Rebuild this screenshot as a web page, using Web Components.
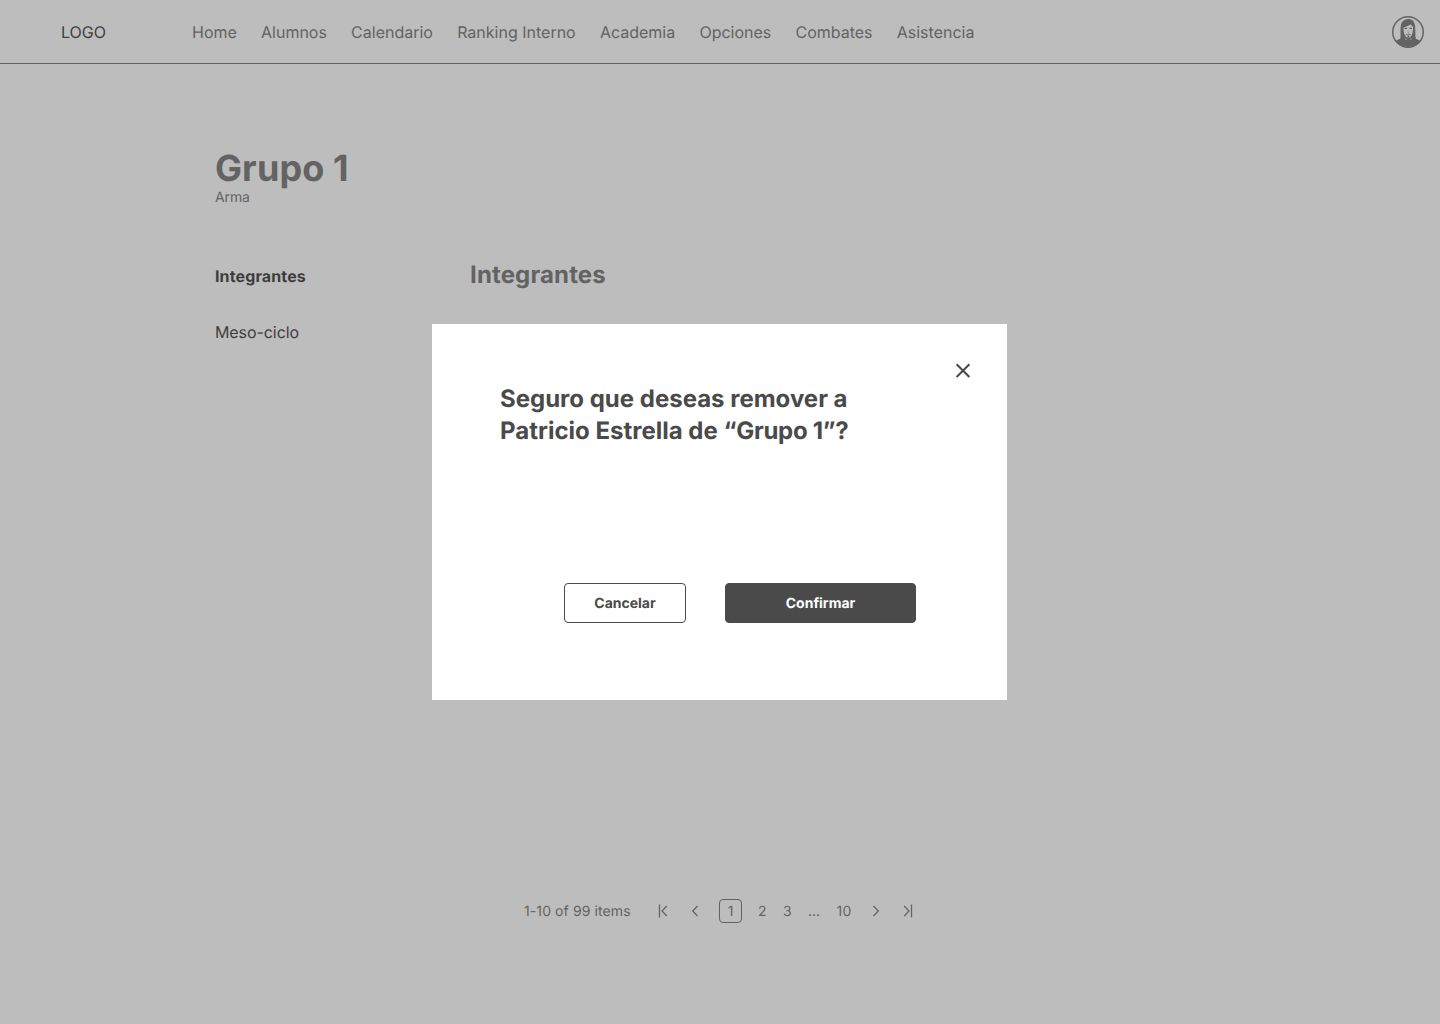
<!DOCTYPE html>
<html lang="es">
<head>
<meta charset="utf-8">
<title>Grupo 1</title>
<style>
html,body{margin:0;height:100%}
body{font-family:Inter,"Liberation Sans",sans-serif;color:#636363;background:#bdbdbd;overflow:hidden;text-rendering:geometricPrecision}
</style>
</head>
<body>
<group-page></group-page>
<script>
const define=(name,html)=>customElements.define(name,class extends HTMLElement{
  constructor(){super();const t=document.createElement('template');t.innerHTML=html;
    this.attachShadow({mode:'open'}).append(t.content.cloneNode(true));}
});

define('user-avatar',`<style>:host{display:block;width:32px;height:32px}svg{display:block}</style>
<svg width="32" height="32" viewBox="0 0 32 32" fill="none">
<defs><clipPath id="c"><circle cx="16" cy="16" r="15"/></clipPath></defs>
<g clip-path="url(#c)" fill="#636363">
<path d="M8.200 22.800C9 19 8.200 15.500 8.700 10.500C9.200 5.500 12 3.300 14.800 3.400C16 2.700 22.300 2.600 23.100 10C23.600 15.500 23 19 23.800 22.800C26 23.600 28 24.500 29 26L26 32H6L3 26C4 24.500 6 23.600 8.200 22.800Z"/>
<path d="M11.600 11.500C13.500 10.500 17.500 9.600 18.300 8.200C19.200 9.400 20.600 10.200 21 11.300C21.200 14 20.800 17.500 19.500 19.700C18.700 21 17.500 21.500 16.300 21.500C15 21.500 13.900 21 13.100 19.700C11.700 17.500 11.400 14 11.600 11.500Z" fill="#bdbdbd"/>
<path d="M12.600 11.900Q13.800 11.200 15 11.900V12.900H12.600ZM17.500 11.900Q18.700 11.200 19.900 11.900V12.900H17.500ZM15.500 15.800H17.100L16.700 16.400H15.900ZM13.200 20.200Q13.500 17.700 16.300 17.500Q19.100 17.700 19.400 20.200L18.700 19.300Q18 18.300 16.300 18.400Q14.600 18.300 13.900 19.300ZM15.200 19.600H17.400L17 21.600H15.600Z"/>
<path d="M13 22L15.800 23.200L13.200 24.200ZM19.600 22L16.800 23.200L19.400 24.200Z" fill="#bdbdbd" opacity=".45"/>
</g>
<circle cx="16" cy="16" r="15.250" stroke="#636363" stroke-width="1.500"/></svg>`);

define('nav-link',`<style>:host{display:block;font-size:16px;line-height:24px;white-space:nowrap}</style><slot></slot>`);

define('top-bar',`<style>
:host{display:flex;box-sizing:border-box;height:64px;border-bottom:1px solid #636363;align-items:center;padding:0 16px 0 61px}
.logo{width:131px;font-size:16px;line-height:24px;color:#3d3d3d}
nav{display:flex;gap:24.200px;flex:1}
</style>
<div class="logo">LOGO</div>
<nav><nav-link>Home</nav-link><nav-link>Alumnos</nav-link><nav-link>Calendario</nav-link><nav-link>Ranking Interno</nav-link><nav-link>Academia</nav-link><nav-link>Opciones</nav-link><nav-link>Combates</nav-link><nav-link>Asistencia</nav-link></nav>
<user-avatar></user-avatar>`);

define('group-heading',`<style>:host{display:block;padding:82px 0 0 215px}
h1{margin:0;font-size:36px;line-height:42px;font-weight:700;padding-top:1px;letter-spacing:.1px}
p{margin:0;font-size:14px;line-height:18px;letter-spacing:-.1px}</style>
<h1><slot></slot></h1><p><slot name="kind"></slot></p>`);

define('group-body',`<style>:host{display:flex;box-sizing:border-box;padding:51px 0 0 215px;height:692px}
aside{width:255px;display:flex;flex-direction:column;gap:32px;font-size:16px;line-height:24px;color:#3d3d3d;padding-top:6px}
b{font-weight:700;letter-spacing:.12px}
span{letter-spacing:-.08px}
h2{margin:0;font-size:24px;line-height:32px;font-weight:700;padding-top:1px;letter-spacing:.14px}</style>
<aside><b>Integrantes</b><span>Meso-ciclo</span></aside><main><h2>Integrantes</h2></main>`);

define('page-arrow',`<style>:host{display:block;width:24px;height:24px}svg{display:block;fill:none;stroke:#636363;stroke-width:1.250}
path{display:none}:host([to=first]) .first,:host([to=prev]) .prev,:host([to=next]) .next,:host([to=last]) .last{display:block}</style>
<svg width="24" height="24" viewBox="0 0 24 24"><path class="first" d="M8.500 5.500V18.500M15.800 7L11 12L15.800 17"/><path class="prev" d="M14.500 7L9.700 12L14.500 17"/><path class="next" d="M9.500 7L14.300 12L9.500 17"/><path class="last" d="M15.500 5.500V18.500M8.200 7L13 12L8.200 17"/></svg>`);

define('page-nav',`<style>
:host{display:flex;align-items:center;height:24px;padding-left:524px;font-size:14px;line-height:24px}
.count,.n,.end{padding-top:2px}
.count{width:127px;letter-spacing:.1px}
.on{box-sizing:border-box;width:23px;height:24px;border:1px solid #636363;border-radius:4px;line-height:24px;text-align:center;margin:0 16px 0 12px}
.n{margin-right:16.400px}.end{width:16px;margin-right:12px;letter-spacing:.3px}
page-arrow+page-arrow{margin-left:8px}
</style>
<span class="count">1-10 of 99 items</span><page-arrow to="first"></page-arrow><page-arrow to="prev"></page-arrow>
<span class="on">1</span><span class="n">2</span><span class="n">3</span><span class="n">...</span><span class="end">10</span>
<page-arrow to="next"></page-arrow><page-arrow to="last"></page-arrow>`);

define('dialog-button',`<style>:host{display:flex;box-sizing:border-box;height:40px;width:122px;padding-top:1px;align-items:center;justify-content:center;border:1px solid #4a4a4a;border-radius:4px;font-size:14px;font-weight:700;line-height:20px;color:#4a4a4a}
:host([primary]){width:191px;background:#4a4a4a;color:#fff}</style><slot></slot>`);

define('confirm-dialog',`<style>
:host{position:absolute;left:432px;top:324px;width:575px;height:376px;background:#fff;color:#4a4a4a;box-sizing:border-box;padding:34px 32px 0 68px;display:flex;flex-direction:column}
svg{display:block;align-self:flex-end}
h2{margin:1px 0 0;font-size:24px;line-height:32px;font-weight:700;white-space:nowrap}
.actions{display:flex;gap:39px;padding:136px 0 0 64px}
</style>
<svg width="24" height="24" viewBox="0 0 24 24" fill="none" stroke="#4a4a4a" stroke-width="2"><path d="M5.600 6.200L18.400 19M18.400 6.200L5.600 19"/></svg>
<h2><slot></slot></h2>
<div class="actions"><dialog-button>Cancelar</dialog-button><dialog-button primary>Confirmar</dialog-button></div>`);

define('group-page',`<style>:host{display:block;position:relative;width:1440px;height:1024px;background:#bdbdbd;overflow:hidden}
.quoted{letter-spacing:-.28px}</style>
<top-bar></top-bar>
<group-heading>Grupo 1<span slot="kind">Arma</span></group-heading>
<group-body></group-body>
<page-nav></page-nav>
<confirm-dialog>Seguro que deseas remover a<br>Patricio Estrella de <span class="quoted">“Grupo 1”?</span></confirm-dialog>`);
</script>
</body>
</html>
